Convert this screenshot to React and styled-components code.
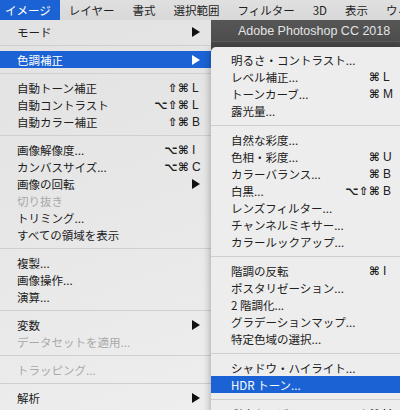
import styled, { createGlobalStyle } from "styled-components";

const GlobalStyle = createGlobalStyle`
  html, body {
    margin: 0;
    padding: 0;
    background: #e4e4e4;
    overflow: hidden;
  }
`;

const JP = `"Noto Sans CJK JP", "Noto Sans", "DejaVu Sans", sans-serif`;

const LEFT_ITEMS = [
  { label: "モード", arrow: true },
  { sep: true },
  { label: "色調補正", arrow: true, active: true },
  { sep: true },
  { label: "自動トーン補正", mods: "⇧⌘", keyChar: "L" },
  { label: "自動コントラスト", mods: "⌥⇧⌘", keyChar: "L" },
  { label: "自動カラー補正", mods: "⇧⌘", keyChar: "B" },
  { sep: true },
  { label: "画像解像度...", mods: "⌥⌘", keyChar: "I" },
  { label: "カンバスサイズ...", mods: "⌥⌘", keyChar: "C" },
  { label: "画像の回転", arrow: true },
  { label: "切り抜き", disabled: true },
  { label: "トリミング..." },
  { label: "すべての領域を表示" },
  { sep: true },
  { label: "複製..." },
  { label: "画像操作..." },
  { label: "演算..." },
  { sep: true },
  { label: "変数", arrow: true },
  { label: "データセットを適用...", disabled: true },
  { sep: true },
  { label: "トラッピング...", disabled: true },
  { sep: true },
  { label: "解析", arrow: true },
];

const RIGHT_ITEMS = [
  { label: "明るさ・コントラスト..." },
  { label: "レベル補正...", mods: "⌘", keyChar: "L" },
  { label: "トーンカーブ...", mods: "⌘", keyChar: "M" },
  { label: "露光量..." },
  { sep: true },
  { label: "自然な彩度..." },
  { label: "色相・彩度...", mods: "⌘", keyChar: "U" },
  { label: "カラーバランス...", mods: "⌘", keyChar: "B" },
  { label: "白黒...", mods: "⌥⇧⌘", keyChar: "B" },
  { label: "レンズフィルター..." },
  { label: "チャンネルミキサー..." },
  { label: "カラールックアップ..." },
  { sep: true },
  { label: "階調の反転", mods: "⌘", keyChar: "I" },
  { label: "ポスタリゼーション..." },
  { label: "2 階調化..." },
  { label: "グラデーションマップ..." },
  { label: "特定色域の選択..." },
  { sep: true },
  { label: "シャドウ・ハイライト..." },
  { label: "HDR トーン...", active: true },
  { sep: true },
  { label: "彩度を下げる", mods: "⇧⌘", keyChar: "U" },
  { label: "カラーの適用..." },
  { label: "色の置き換え..." },
];

const MENUBAR = ["イメージ", "レイヤー", "書式", "選択範囲", "フィルター", "3D", "表示", "ウィ"];

const Screen = styled.div`
  position: relative;
  width: 400px;
  height: 410px;
  overflow: hidden;
  display: flex;
  flex-direction: column;
  font-family: ${JP};
`;

const MenuBar = styled.div`
  height: 20px;
  flex: none;
  display: flex;
  align-items: stretch;
  margin-left: -4px;
  background: linear-gradient(#e0e0e0, #d8d8d8);
  white-space: nowrap;
`;

const BarItem = styled.div`
  display: flex;
  align-items: center;
  padding: 0 9px;
  font-size: 11.5px;
  color: ${(p) => (p.$active ? "#ffffff" : "#1e1e1e")};
  background: ${(p) => (p.$active ? "#1b63d4" : "transparent")};
`;

const Body = styled.div`
  flex: 1;
  display: flex;
  min-height: 0;
`;

const Menu = styled.div`
  width: 211px;
  flex: none;
  padding-top: 3px;
  background: linear-gradient(160deg, #e2e2e2 0%, #e8e8e8 55%, #eeeeee 100%);
  box-sizing: border-box;
`;

const Row = styled.div`
  height: 17px;
  display: flex;
  align-items: center;
  padding: 0 ${(p) => p.$right}px 0 ${(p) => p.$left}px;
  font-size: 11.5px;
  white-space: nowrap;
  color: ${(p) => (p.$active ? "#ffffff" : p.$disabled ? "#a9a9a9" : "#202020")};
  background: ${(p) => (p.$active ? "#1b63d4" : "transparent")};
`;

const Label = styled.span`
  flex: 1;
`;

const Mods = styled.span`
  font-family: "DejaVu Sans", sans-serif;
  font-size: 11.5px;
  font-weight: bold;
  letter-spacing: 0.3px;
`;

const KeyCol = styled.span`
  width: 14px;
  margin-left: 3px;
  display: flex;
  align-items: center;
  font-family: "Liberation Sans", "DejaVu Sans", sans-serif;
  font-size: 12px;
`;

const Separator = styled.div`
  height: ${(p) => p.$h}px;
  display: flex;
  align-items: center;
  &::before {
    content: "";
    flex: 1;
    height: 1px;
    background: #cfcfcf;
  }
`;

const WindowArea = styled.div`
  position: relative;
  flex: 1;
  background: #464646;
`;

const TitleBar = styled.div`
  height: 21px;
  display: flex;
  align-items: center;
  padding-left: 27px;
  background: linear-gradient(#565656, #4d4d4d);
  border-bottom: 1px solid #5c5c5c;
  font-family: "Liberation Sans", Arial, sans-serif;
  font-size: 12.5px;
  color: #e4e4e4;
  white-space: nowrap;
`;

const SubMenu = styled.div`
  position: absolute;
  left: 0;
  right: 0;
  top: 27px;
  padding-top: 4px;
  background: #ededed;
  border-top-left-radius: 5px;
  box-shadow: 0 2px 8px rgba(0, 0, 0, 0.35);
`;

const Arrow = ({ color }) => (
  <svg width="8" height="10" viewBox="0 0 8 10">
    <polygon points="0,0 8,5 0,10" fill={color} />
  </svg>
);

const MenuList = ({ items, left, right, sepHeight }) =>
  items.map((it, i) =>
    it.sep ? (
      <Separator key={i} $h={sepHeight} />
    ) : (
      <Row key={i} $left={left} $right={right} $active={it.active} $disabled={it.disabled}>
        <Label>{it.label}</Label>
        {it.mods && <Mods>{it.mods}</Mods>}
        {(it.keyChar || it.arrow) && (
          <KeyCol>
            {it.arrow ? <Arrow color={it.active ? "#ffffff" : "#111111"} /> : it.keyChar}
          </KeyCol>
        )}
      </Row>
    )
  );

export default function App() {
  return (
    <>
      <GlobalStyle />
      <Screen>
        <MenuBar>
          {MENUBAR.map((m, i) => (
            <BarItem key={m} $active={i === 0}>
              {m}
            </BarItem>
          ))}
        </MenuBar>
        <Body>
          <Menu>
            <MenuList items={LEFT_ITEMS} left={17} right={5} sepHeight={11} />
          </Menu>
          <WindowArea>
            <TitleBar>Adobe Photoshop CC 2018</TitleBar>
            <SubMenu>
              <MenuList items={RIGHT_ITEMS} left={20} right={3} sepHeight={12} />
            </SubMenu>
          </WindowArea>
        </Body>
      </Screen>
    </>
  );
}
